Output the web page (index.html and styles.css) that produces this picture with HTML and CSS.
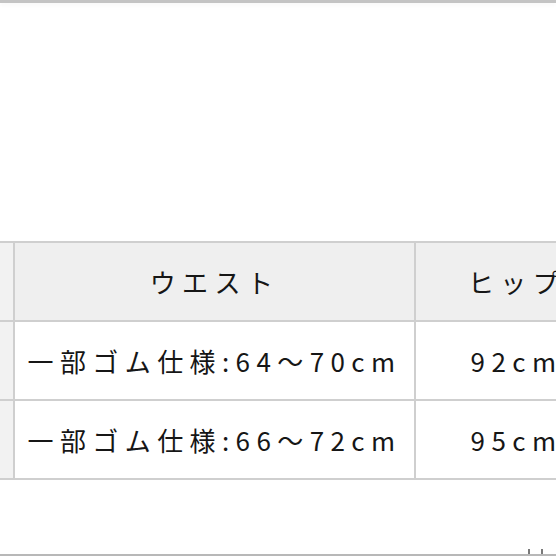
FILE: index.html
```html
<!DOCTYPE html>
<html lang="ja">
<head>
<meta charset="utf-8">
<link rel="stylesheet" href="styles.css">
</head>
<body>
<div class="topbar"></div>
<div class="page">
  <div class="table-wrap">
    <table class="size-table">
      <thead>
        <tr>
          <th class="stub"></th>
          <th class="col-waist">ウエスト</th>
          <th class="col-hip">ヒップ</th>
          <th class="col-more">股上</th>
        </tr>
      </thead>
      <tbody>
        <tr>
          <th class="stub"></th>
          <td>一部ゴム仕様:64〜70cm</td>
          <td>92cm</td>
          <td>28cm</td>
        </tr>
        <tr>
          <th class="stub"></th>
          <td>一部ゴム仕様:66〜72cm</td>
          <td>95cm</td>
          <td>29cm</td>
        </tr>
      </tbody>
    </table>
  </div>
  <div class="footer">
    <span class="mark"></span>
    <span class="mark"></span>
  </div>
</div>
</body>
</html>
```

FILE: styles.css
```css
html, body {
  margin: 0;
  padding: 0;
  background: #ffffff;
  width: 556px;
  height: 556px;
  overflow: hidden;
}

body {
  font-family: "Noto Sans CJK JP", "Noto Sans", sans-serif;
  color: #161616;
}

.topbar {
  height: 3px;
  background: #c4c4c4;
  box-shadow: 0 2px 4px rgba(0, 0, 0, 0.04);
}

.page {
  padding-top: 238px;
}

.table-wrap {
  width: 556px;
  overflow: hidden;
}

.size-table {
  border-collapse: separate;
  border-spacing: 0;
  border-top: 2px solid #cfcfcf;
  table-layout: fixed;
  width: 827px;
}

.size-table th,
.size-table td {
  border-right: 2px solid #cfcfcf;
  border-bottom: 2px solid #cfcfcf;
  height: 77px;
  padding: 0;
  text-align: center;
  vertical-align: middle;
  font-size: 26px;
  font-weight: normal;
  letter-spacing: 6.4px;
  white-space: nowrap;
  line-height: 1;
}

.size-table thead th {
  background: #efefef;
}

.size-table tbody td {
  background: #ffffff;
}

.size-table .stub {
  width: 13px;
  background: #f2f2f2;
}

.size-table .col-waist {
  width: 399px;
}

.size-table .col-hip {
  width: 201px;
}

.size-table .col-more {
  width: 206px;
}

.footer {
  position: relative;
  margin-top: 69px;
  height: 7px;
  display: flex;
  justify-content: flex-end;
  gap: 11px;
  padding-right: 13px;
}

.footer::before {
  content: "";
  position: absolute;
  left: 0;
  right: 0;
  top: 5px;
  height: 2px;
  background: #b8b8b8;
}

.mark {
  width: 2px;
  height: 7px;
  background: #7a7a7a;
}
```
